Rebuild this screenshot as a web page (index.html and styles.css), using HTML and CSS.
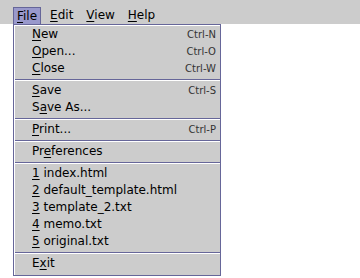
FILE: index.html
```html
<!DOCTYPE html>
<html lang="en">
<head>
    <meta charset="UTF-8">
    <title>File Menu</title>
    <link rel="stylesheet" href="styles.css">
</head>
<body>
    <div class="menubar">
        <span class="menu active"><u>F</u>ile</span>
        <span class="menu"><u>E</u>dit</span>
        <span class="menu"><u>V</u>iew</span>
        <span class="menu"><u>H</u>elp</span>
    </div>
    <div class="popup">
        <div class="item"><span><u>N</u>ew</span><span class="accel">Ctrl-N</span></div>
        <div class="item"><span><u>O</u>pen...</span><span class="accel">Ctrl-O</span></div>
        <div class="item"><span><u>C</u>lose</span><span class="accel">Ctrl-W</span></div>
        <div class="sep"></div>
        <div class="item"><span><u>S</u>ave</span><span class="accel">Ctrl-S</span></div>
        <div class="item"><span>S<u>a</u>ve As...</span></div>
        <div class="sep"></div>
        <div class="item"><span><u>P</u>rint...</span><span class="accel">Ctrl-P</span></div>
        <div class="sep"></div>
        <div class="item"><span>Pr<u>e</u>ferences</span></div>
        <div class="sep"></div>
        <div class="item"><span><u>1</u> index.html</span></div>
        <div class="item"><span><u>2</u> default_template.html</span></div>
        <div class="item"><span><u>3</u> template_2.txt</span></div>
        <div class="item"><span><u>4</u> memo.txt</span></div>
        <div class="item"><span><u>5</u> original.txt</span></div>
        <div class="sep"></div>
        <div class="item"><span>E<u>x</u>it</span></div>
    </div>
</body>
</html>
```

FILE: styles.css
```css
body {
    margin: 0;
    background-color: #fff;
    font-family: "DejaVu Sans", sans-serif;
    font-size: 12px;
    color: #000;
}
u {
    text-decoration-thickness: 1px;
    text-underline-offset: 2px;
}
.menubar {
    display: flex;
    gap: 5px;
    height: 24px;
    padding: 7px 0 0 13px;
    box-sizing: border-box;
    background-color: #ccc;
}
.menu {
    height: 17px;
    line-height: 17px;
    padding: 0 4px;
    box-sizing: border-box;
}
.menu.active {
    background-color: #9999cc;
    border: 1px solid #666699;
    border-bottom: none;
    line-height: 16px;
    padding: 0 3px;
}
.popup {
    position: absolute;
    top: 24px;
    left: 13px;
    width: 208px;
    padding: 1px 0 3px;
    box-sizing: border-box;
    background-color: #ccc;
    border: 1px solid #666699;
    box-shadow: inset 1px 1px 0 #fff;
}
.item {
    display: flex;
    justify-content: space-between;
    align-items: center;
    height: 17px;
    line-height: 17px;
    padding: 0 4px 0 18px;
}
.accel {
    font-size: 10px;
    color: #333;
}
.sep {
    height: 2px;
    margin: 2px 0 1px 1px;
    border-top: 1px solid #666699;
    background-color: #fff;
    box-sizing: border-box;
}
```
